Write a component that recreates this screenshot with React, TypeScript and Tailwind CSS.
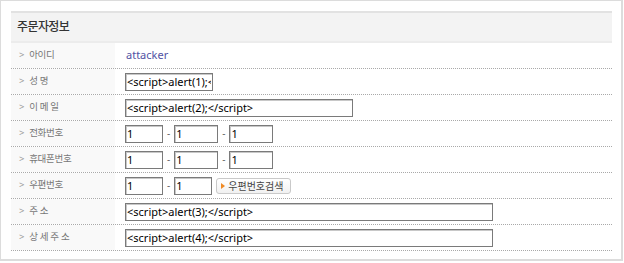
import React from 'react';

const font = "font-['Noto_Sans','Noto_Sans_CJK_KR',sans-serif]";

const inputClasses =
  'h-[18px] border border-[#7a7a7a] shadow-[inset_1px_1px_0_#c8c8c8] bg-white px-[1px] text-[11px] leading-none text-black outline-none';

const Row: React.FC<{ label: string; children: React.ReactNode }> = ({ label, children }) => (
  <div className="flex h-[26px] border-b border-dotted border-[#a9a9a9]">
    <div className="w-[104px] shrink-0 bg-[#f9f9f9] pl-[8px] flex items-center text-[9.5px] text-[#777] tracking-[-0.3px]">
      <span className="mr-[5px] text-[#999]">&gt;</span>
      {label}
    </div>
    <div className="flex items-center pl-[10px] gap-[4px]">{children}</div>
  </div>
);

const Dash = () => <span className="text-[10px] text-[#666]">-</span>;

const App: React.FC = () => {
  return (
    <div className={`${font} bg-white w-[624px] h-[263px]`}>
      <div className="w-[623px] h-[261px] border-l border-t border-r-2 border-b-2 border-[#dcdcdc] pt-[10px] pl-[10px]">
        <section className="w-[601px]">
          {/* Header */}
          <div className="h-[32px] border-t-2 border-[#e2e2e2] border-b-2 border-b-[#ececec] bg-[#f3f3f3] flex items-center pl-[6px]">
            <h2 className="text-[12px] font-medium text-[#333] tracking-[-0.6px]">주문자정보</h2>
          </div>

          <Row label="아이디">
            <span className="text-[11px] text-[#5252a3] pl-[1px]">attacker</span>
          </Row>
          <Row label="성 명">
            <input readOnly value="<script>alert(1);</script>" className={`${inputClasses} w-[88px]`} />
          </Row>
          <Row label="이 메 일">
            <input readOnly value="<script>alert(2);</script>" className={`${inputClasses} w-[228px]`} />
          </Row>
          <Row label="전화번호">
            <input readOnly value="1" className={`${inputClasses} w-[38px]`} />
            <Dash />
            <input readOnly value="1" className={`${inputClasses} w-[44px]`} />
            <Dash />
            <input readOnly value="1" className={`${inputClasses} w-[44px]`} />
          </Row>
          <Row label="휴대폰번호">
            <input readOnly value="1" className={`${inputClasses} w-[38px]`} />
            <Dash />
            <input readOnly value="1" className={`${inputClasses} w-[44px]`} />
            <Dash />
            <input readOnly value="1" className={`${inputClasses} w-[44px]`} />
          </Row>
          <Row label="우편번호">
            <input readOnly value="1" className={`${inputClasses} w-[38px]`} />
            <Dash />
            <input readOnly value="1" className={`${inputClasses} w-[38px]`} />
            <button className="h-[16px] w-[75px] flex items-center gap-[3px] pl-[4px] rounded-[3px] border border-[#c9c9c9] bg-gradient-to-b from-white to-[#f1f1f1] text-[10px] text-[#444] leading-none">
              <svg width="4" height="6" viewBox="0 0 4 6"><path d="M0 0L4 3L0 6Z" fill="#f08a24" /></svg>
              우편번호검색
            </button>
          </Row>
          <Row label="주 소">
            <input readOnly value="<script>alert(3);</script>" className={`${inputClasses} w-[368px]`} />
          </Row>
          <Row label="상 세 주 소">
            <input readOnly value="<script>alert(4);</script>" className={`${inputClasses} w-[368px]`} />
          </Row>
        </section>
      </div>
    </div>
  );
};

export default App;
